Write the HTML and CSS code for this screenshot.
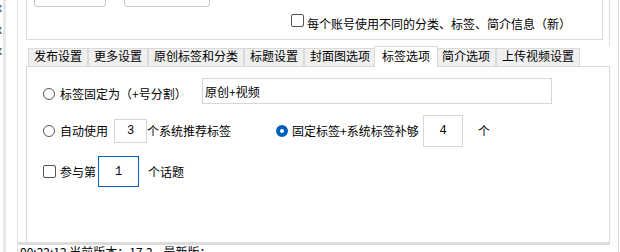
FILE: index.html
```html
<!DOCTYPE html>
<html>
<head>
  <meta charset="UTF-8">
  <title>标签选项</title>
  <link rel="stylesheet" href="styles.css">
</head>
<body>
  <div class="window">
    <div class="side">
      <div class="side-list">
        <span>x</span>
        <span>x</span>
        <span>x</span>
      </div>
      <div class="side-band"></div>
    </div>

    <div class="main">
      <div class="upper">
        <div class="group">
          <div class="btn-row">
            <div class="btn-stub first"></div>
            <div class="btn-stub second"></div>
          </div>
          <div class="check-row">
            <span class="check"></span>
            <span class="check-text">每个账号使用不同的分类、标签、简介信息（新）</span>
          </div>
        </div>
      </div>

      <div class="tabbar">
        <div class="tab">发布设置</div>
        <div class="tab">更多设置</div>
        <div class="tab">原创标签和分类</div>
        <div class="tab">标题设置</div>
        <div class="tab">封面图选项</div>
        <div class="tab active">标签选项</div>
        <div class="tab">简介选项</div>
        <div class="tab">上传视频设置</div>
      </div>

      <div class="panel">
        <div class="row row-fixed">
          <div class="opt">
            <span class="radio"></span>
            <span class="label">标签固定为（+号分割）</span>
          </div>
          <input class="field tags" type="text" value="原创+视频">
        </div>

        <div class="row row-auto">
          <span class="radio"></span>
          <span class="label">自动使用</span>
          <input class="field num auto-num" type="text" value="3">
          <span class="label after-num">个系统推荐标签</span>
          <span class="radio checked"></span>
          <span class="label fill-text">固定标签+系统标签补够</span>
          <input class="field num fill-num" type="text" value="4">
          <span class="label unit">个</span>
        </div>

        <div class="row row-topic">
          <span class="check"></span>
          <span class="label">参与第</span>
          <input class="field num topic-num" type="text" value="1">
          <span class="label topic-text">个话题</span>
        </div>
      </div>

      <div class="status">00:22:12 当前版本：17.2&nbsp;&nbsp;&nbsp; 最新版：</div>
    </div>
  </div>
</body>
</html>
```

FILE: styles.css
```css
* {
  box-sizing: border-box;
  margin: 0;
  padding: 0;
}

body {
  width: 620px;
  height: 252px;
  overflow: hidden;
  background: #ffffff;
  color: #000000;
  font-family: "Noto Sans CJK SC", "Noto Sans", sans-serif;
  font-size: 12px;
  line-height: 14px;
}

.window {
  display: flex;
  height: 252px;
  overflow: hidden;
}

/* left list, mostly scrolled out of view */
.side {
  display: flex;
  width: 18px;
  border-right: 1px solid #e3e3e3;
}

.side-list {
  width: 3px;
  overflow: hidden;
  padding-top: 1px;
}

.side-list span {
  display: block;
  margin-left: -4px;
  height: 21.5px;
  line-height: 14px;
  color: #333333;
  font-family: "Liberation Sans", sans-serif;
}

.side-band {
  width: 3px;
  background: #e8e8e8;
}

.main {
  display: flex;
  flex-direction: column;
  width: 601px;
  border-right: 1px solid #dcdcdc;
}

.main > div {
  flex: none;
}

/* upper group box */
.upper {
  width: 592px;
  height: 46px;
  padding-left: 8px;
  border-right: 1px solid #dcdcdc;
}

.group {
  width: 577px;
  height: 40px;
  padding-left: 7px;
  border: 1px solid #dcdcdc;
  border-top: none;
}

.btn-row {
  display: flex;
}

.btn-stub {
  height: 7px;
  border: 1px solid #c8c8c8;
  border-top: none;
  border-radius: 0 0 4px 4px;
}

.btn-stub.first {
  width: 72px;
}

.btn-stub.second {
  width: 86px;
  margin-left: 18px;
}

.check-row {
  display: flex;
  align-items: flex-start;
  margin-top: 7px;
  padding-left: 257px;
}

.check-text {
  margin-top: 3px;
  margin-left: 3px;
}

.check {
  width: 13px;
  height: 13px;
  flex: none;
  border: 1px solid #555555;
  border-radius: 2px;
  background: #ffffff;
}

/* tabs */
.tabbar {
  display: flex;
  align-items: flex-end;
  height: 20px;
  margin-left: 10px;
}

.tab {
  height: 18px;
  padding: 0 5px;
  border: 1px solid #dadada;
  border-bottom: none;
  background: #f0f0f0;
  white-space: nowrap;
}

.tab.active {
  position: relative;
  z-index: 1;
  height: 21px;
  margin: 0 -2px -1px;
  padding: 2px 7px 0;
  background: #ffffff;
}

.panel {
  width: 584px;
  height: 176px;
  margin-left: 8px;
  padding-left: 16px;
  border: 1px solid #dadada;
  border-bottom: none;
}

.row {
  display: flex;
  align-items: center;
  white-space: nowrap;
}

.row-fixed {
  height: 26px;
  margin-top: 11px;
}

.row-auto {
  height: 32px;
  margin-top: 11px;
}

.row-topic {
  height: 31px;
  margin-top: 9px;
}

.opt {
  display: flex;
  align-items: center;
  width: 159px;
  margin-top: 5px;
}

.label {
  margin-left: 5px;
}

.radio {
  width: 12px;
  height: 12px;
  flex: none;
  border: 1px solid #555555;
  border-radius: 50%;
  background: #ffffff;
}

.radio.checked {
  margin-left: 45px;
  border: 4px solid #005fb8;
  background: #ffffff;
}

.field {
  border: 1px solid #d6d6d6;
  background: #ffffff;
  color: #000000;
  outline: none;
  font-family: "Noto Sans CJK SC", sans-serif;
  font-size: 12px;
}

.tags {
  width: 350px;
  height: 26px;
  padding: 0 2px;
}

.num {
  text-align: center;
  font-family: "Liberation Mono", monospace;
  font-size: 12px;
}

.auto-num {
  width: 33px;
  height: 24px;
  margin-left: 6px;
}

.after-num {
  margin-left: 0;
}

.fill-text {
  width: 131px;
  margin-left: 4px;
}

.fill-num {
  width: 40px;
  height: 32px;
}

.unit {
  margin-left: 15px;
}

.row-topic .check {
  margin-top: -1px;
}

.row-topic .label {
  margin-left: 4px;
}

.topic-num {
  width: 41px;
  height: 31px;
  margin-left: 2px;
  border-color: #005fb8;
}

.row-topic .topic-text {
  margin-left: 9px;
}

/* status line */
.status {
  width: 592px;
  padding-left: 2px;
  border-top: 3px solid #dcdcdc;
  white-space: nowrap;
}
```
